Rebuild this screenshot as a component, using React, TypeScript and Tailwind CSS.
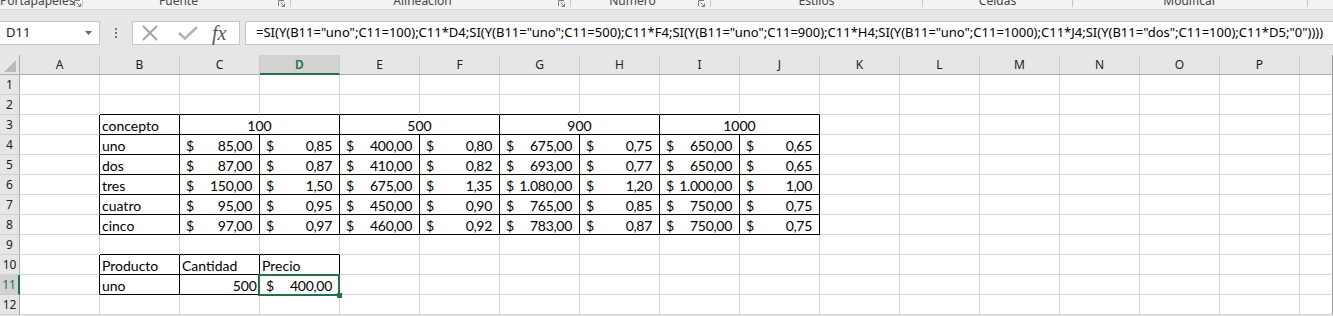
import React from "react";

const COLS = ["A", "B", "C", "D", "E", "F", "G", "H", "I", "J", "K", "L", "M", "N", "O", "P"];

type Cell = { t?: string; kind?: "text" | "acct" | "num" | "center"; span?: number };

const prices: string[][] = [
  ["uno", "85,00", "0,85", "400,00", "0,80", "675,00", "0,75", "650,00", "0,65"],
  ["dos", "87,00", "0,87", "410,00", "0,82", "693,00", "0,77", "650,00", "0,65"],
  ["tres", "150,00", "1,50", "675,00", "1,35", "1.080,00", "1,20", "1.000,00", "1,00"],
  ["cuatro", "95,00", "0,95", "450,00", "0,90", "765,00", "0,85", "750,00", "0,75"],
  ["cinco", "97,00", "0,97", "460,00", "0,92", "783,00", "0,87", "750,00", "0,75"],
];

const groups = [
  { w: 82, label: "Portapapeles", launcher: true },
  { w: 207, label: "Fuente", launcher: true },
  { w: 279, label: "Alineación", launcher: true },
  { w: 139, label: "Número", launcher: true },
  { w: 211, label: "Estilos", launcher: false },
  { w: 149, label: "Celdas", launcher: false },
  { w: 234, label: "Modificar", launcher: false },
];

const FORMULA =
  '=SI(Y(B11="uno";C11=100);C11*D4;SI(Y(B11="uno";C11=500);C11*F4;SI(Y(B11="uno";C11=900);C11*H4;SI(Y(B11="uno";C11=1000);C11*J4;SI(Y(B11="dos";C11=100);C11*D5;"0"))))';

function rowCells(r: number): Cell[] {
  const empty = (n: number): Cell[] => Array.from({ length: n }, () => ({}));
  if (r === 3) {
    return [
      {},
      { t: "concepto" },
      { t: "100", kind: "center", span: 2 },
      { t: "500", kind: "center", span: 2 },
      { t: "900", kind: "center", span: 2 },
      { t: "1000", kind: "center", span: 2 },
      ...empty(6),
    ];
  }
  if (r >= 4 && r <= 8) {
    const p = prices[r - 4];
    return [{}, { t: p[0] }, ...p.slice(1).map((v) => ({ t: v, kind: "acct" as const })), ...empty(6)];
  }
  if (r === 10) {
    return [{}, { t: "Producto" }, { t: "Cantidad" }, { t: "Precio" }, ...empty(12)];
  }
  if (r === 11) {
    return [{}, { t: "uno" }, { t: "500", kind: "num" }, { t: "400,00", kind: "acct" }, ...empty(12)];
  }
  return empty(16);
}

// black edges of the two bordered tables
const blackRight = (r: number, c: number) =>
  (r >= 3 && r <= 8 && c <= 9) || (r >= 10 && r <= 11 && c <= 3);
const blackBottom = (r: number, c: number) =>
  (r >= 2 && r <= 8 && c >= 1 && c <= 9) || (r >= 9 && r <= 11 && c >= 1 && c <= 3);

const Launcher = () => (
  <svg width="8" height="8" viewBox="0 0 8 8" fill="none" stroke="#7a7a7a" strokeWidth="1">
    <path d="M0.5 6V0.5H6" />
    <path d="M2.5 2.5L6.5 6.5M6.5 3.5V6.5H3.5" />
  </svg>
);

const SheetRow = ({ r }: { r: number }) => {
  const cells = rowCells(r);
  const selected = r === 11;
  let col = 0;
  return (
    <div className="flex h-[20px]">
      <div
        className={
          selected
            ? "flex w-[20px] shrink-0 items-center justify-center border-b border-r-2 border-b-[#c8c8c8] border-r-[#217346] bg-[#d2d2d2] text-[#217346]"
            : "flex w-[20px] shrink-0 items-center justify-center border-b border-r border-b-[#d0d0d0] border-r-[#ababab] bg-[#e6e6e6] text-[#222]"
        }
      >
        <span className="font-['Noto_Sans',sans-serif] text-[12px] leading-none">{r}</span>
      </div>
      {cells.map((cell, i) => {
        const start = col;
        const span = cell.span ?? 1;
        col += span;
        const end = col - 1;
        const rb = blackRight(r, end) ? "border-r-black" : "border-r-[#d4d4d4]";
        const bb = blackBottom(r, start) ? "border-b-black" : "border-b-[#d4d4d4]";
        const width = span === 2 ? "w-[160px]" : "w-[80px]";
        const isSel = r === 11 && start === 3;
        return (
          <div
            key={i}
            className={`relative h-[20px] shrink-0 border-b border-r ${width} ${rb} ${bb} pt-[1px] text-[14px] leading-[19px] text-black`}
          >
            {cell.kind === "acct" ? (
              <div className="flex justify-between pl-[6px] pr-[7px]">
                <span>$</span>
                <span className="tracking-[-0.3px]">{cell.t}</span>
              </div>
            ) : cell.kind === "center" ? (
              <div className="text-center">{cell.t}</div>
            ) : cell.kind === "num" ? (
              <div className="pr-[2px] text-right">{cell.t}</div>
            ) : (
              <div className="whitespace-nowrap pl-[2px]">{cell.t}</div>
            )}
            {isSel && (
              <>
                <div className="absolute -left-[2px] -top-[1px] z-10 h-[22px] w-[82px] border-2 border-[#217346]" />
                <div className="absolute left-[77px] top-[18px] z-20 h-[5px] w-[5px] bg-[#217346]" />
              </>
            )}
          </div>
        );
      })}
      <div className="h-[20px] flex-1 border-b border-r border-b-[#d4d4d4] border-r-[#9a9a9a]" />
    </div>
  );
};

export default function App() {
  return (
    <div className="h-[316px] w-[1333px] overflow-hidden bg-[#e6e6e6] font-['Lato','Liberation_Sans',sans-serif]">
      {/* ribbon group captions, cut off at the top as in the capture */}
      <div className="flex h-[10px] overflow-hidden border-b border-[#d5d5d5] bg-[#f3f3f3] font-['Noto_Sans',sans-serif] text-[12px] text-[#444]">
        {groups.map((g) => (
          <React.Fragment key={g.label}>
            <div className="flex shrink-0" style={{ width: g.w }}>
              <div className="flex flex-1 justify-center whitespace-nowrap">
                <span className="-mt-[5px] leading-[12px]">{g.label}</span>
              </div>
              {g.launcher && (
                <div className="flex w-[16px] justify-center">
                  <Launcher />
                </div>
              )}
            </div>
            <div className="h-[7px] w-px shrink-0 bg-[#c6c6c6]" />
          </React.Fragment>
        ))}
      </div>

      {/* formula bar */}
      <div className="mt-[11px] flex h-[24px] items-stretch">
        <div className="flex w-[100px] shrink-0 items-center justify-between border border-l-0 border-[#c6c6c6] bg-white pl-[6px] pr-[7px]">
          <span className="font-['Noto_Sans',sans-serif] text-[13px] text-[#222]">D11</span>
          <svg width="7" height="4" viewBox="0 0 7 4">
            <path d="M0 0H7L3.5 4Z" fill="#666" />
          </svg>
        </div>
        <div className="flex w-[32px] shrink-0 flex-col items-center justify-center gap-[2px]">
          <div className="h-[2px] w-[2px] bg-[#777]" />
          <div className="h-[2px] w-[2px] bg-[#777]" />
          <div className="h-[2px] w-[2px] bg-[#777]" />
        </div>
        <div className="flex w-[108px] shrink-0 items-center border border-[#c6c6c6] bg-white pl-[8px]">
          <svg width="18" height="16" viewBox="0 0 18 16" className="mr-[19px]" stroke="#a6a6a6" strokeWidth="2" fill="none">
            <path d="M2 1L16 15M16 1L2 15" />
          </svg>
          <svg width="20" height="14" viewBox="0 0 20 14" className="mr-[14px]" stroke="#b4b4b4" strokeWidth="2.6" fill="none">
            <path d="M1 7L7 12.5L19 1" />
          </svg>
          <span className="font-['Liberation_Serif',serif] text-[20px] italic leading-none text-[#555]">fx</span>
        </div>
        <div className="ml-[5px] flex flex-1 items-center overflow-hidden whitespace-nowrap border border-r-0 border-[#c6c6c6] bg-white pl-[10px] font-['Noto_Sans',sans-serif] text-[13px] text-black">
          {FORMULA}
        </div>
      </div>

      {/* sheet */}
      <div className="mt-[10px] bg-white">
        <div className="flex h-[20px] bg-[#e6e6e6] font-['Noto_Sans',sans-serif] text-[12px] text-[#222]">
          <div className="flex w-[20px] shrink-0 items-end justify-end border-b border-r border-[#ababab] pb-[2px] pr-[3px]">
            <svg width="12" height="12" viewBox="0 0 12 12">
              <path d="M12 0V12H0Z" fill="#b9b9b9" />
            </svg>
          </div>
          {COLS.map((c) =>
            c === "D" ? (
              <div
                key={c}
                className="flex w-[80px] shrink-0 items-center justify-center border-b-2 border-r border-b-[#217346] border-r-[#c8c8c8] bg-[#d2d2d2] pt-[2px] font-semibold text-[#217346]"
              >
                {c}
              </div>
            ) : (
              <div
                key={c}
                className="flex w-[80px] shrink-0 items-center justify-center border-b border-r border-b-[#ababab] border-r-[#c8c8c8]"
              >
                {c}
              </div>
            )
          )}
          <div className="flex-1 border-b border-r border-b-[#ababab] border-r-[#9a9a9a]" />
        </div>
        {Array.from({ length: 12 }, (_, i) => (
          <SheetRow key={i} r={i + 1} />
        ))}
      </div>
    </div>
  );
}
